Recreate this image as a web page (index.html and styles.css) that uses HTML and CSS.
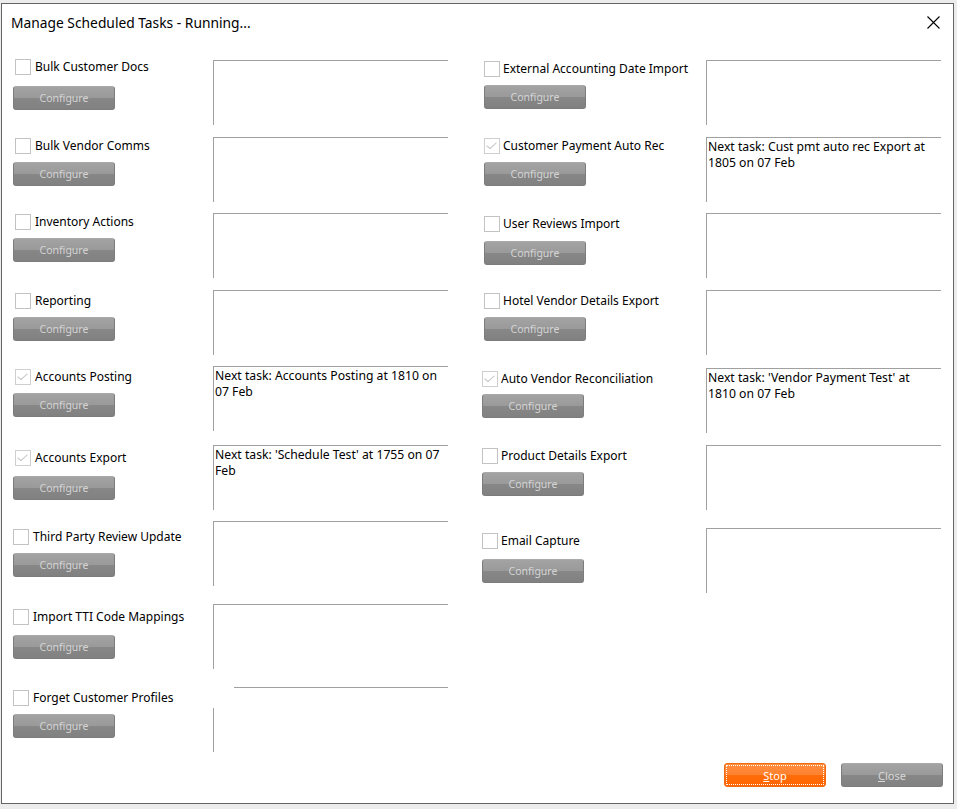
FILE: index.html
```html
<!DOCTYPE html>
<html>
<head>
<meta charset="utf-8">
<title>Manage Scheduled Tasks</title>
<link rel="stylesheet" href="styles.css">
</head>
<body>
<div class="window">
  <div class="titlebar">
    <span class="title">Manage Scheduled Tasks - Running...</span>
    <span class="close-x">
      <svg width="13" height="13" viewBox="0 0 13 13"><path d="M0.5 0.5 L12.5 12.5 M12.5 0.5 L0.5 12.5" stroke="#000" stroke-width="1.1" fill="none"/></svg>
    </span>
  </div>
  <div class="columns">
    <div class="col col-left">
      <div class="row">
        <div class="controls c-a"><label class="check"><span class="box"></span>Bulk Customer Docs</label><span class="btn">Configure</span></div>
        <div class="tbox"></div>
      </div>
      <div class="row g12">
        <div class="controls c-b"><label class="check"><span class="box"></span>Bulk Vendor Comms</label><span class="btn">Configure</span></div>
        <div class="tbox"></div>
      </div>
      <div class="row g11">
        <div class="controls c-b"><label class="check"><span class="box"></span>Inventory Actions</label><span class="btn">Configure</span></div>
        <div class="tbox"></div>
      </div>
      <div class="row g12">
        <div class="controls c-c"><label class="check"><span class="box"></span>Reporting</label><span class="btn">Configure</span></div>
        <div class="tbox"></div>
      </div>
      <div class="row g11">
        <div class="controls c-c"><label class="check"><span class="box on"></span>Accounts Posting</label><span class="btn">Configure</span></div>
        <div class="tbox">Next task: Accounts Posting at 1810 on<br>07 Feb</div>
      </div>
      <div class="row g14">
        <div class="controls c-d"><label class="check"><span class="box on"></span>Accounts Export</label><span class="btn">Configure</span></div>
        <div class="tbox">Next task: 'Schedule Test' at 1755 on 07<br>Feb</div>
      </div>
      <div class="row g11">
        <div class="controls c-e out"><label class="check"><span class="box"></span>Third Party Review Update</label><span class="btn">Configure</span></div>
        <div class="tbox"></div>
      </div>
      <div class="row g18">
        <div class="controls c-d out"><label class="check"><span class="box"></span>Import TTI Code Mappings</label><span class="btn">Configure</span></div>
        <div class="tbox"></div>
      </div>
      <div class="row g18">
        <div class="controls c-c out"><label class="check"><span class="box"></span>Forget Customer Profiles</label><span class="btn">Configure</span></div>
        <div class="tbox masked"></div>
      </div>
    </div>
    <div class="col col-right">
      <div class="row">
        <div class="controls c-b in"><label class="check"><span class="box"></span>External Accounting Date Import</label><span class="btn">Configure</span></div>
        <div class="tbox"></div>
      </div>
      <div class="row g12">
        <div class="controls c-b in"><label class="check"><span class="box on"></span>Customer Payment Auto Rec</label><span class="btn">Configure</span></div>
        <div class="tbox">Next task: Cust pmt auto rec Export at<br>1805 on 07 Feb</div>
      </div>
      <div class="row g11">
        <div class="controls c-c2 in"><label class="check"><span class="box"></span>User Reviews Import</label><span class="btn">Configure</span></div>
        <div class="tbox"></div>
      </div>
      <div class="row g12">
        <div class="controls c-c in"><label class="check"><span class="box"></span>Hotel Vendor Details Export</label><span class="btn">Configure</span></div>
        <div class="tbox"></div>
      </div>
      <div class="row g13">
        <div class="controls c-b2"><label class="check"><span class="box on"></span>Auto Vendor Reconciliation</label><span class="btn">Configure</span></div>
        <div class="tbox">Next task: 'Vendor Payment Test' at<br>1810 on 07 Feb</div>
      </div>
      <div class="row g12">
        <div class="controls c-c"><label class="check"><span class="box"></span>Product Details Export</label><span class="btn">Configure</span></div>
        <div class="tbox"></div>
      </div>
      <div class="row g18">
        <div class="controls c-d"><label class="check"><span class="box"></span>Email Capture</label><span class="btn">Configure</span></div>
        <div class="tbox"></div>
      </div>
    </div>
  </div>
  <div class="footer">
    <span class="btn big orange"><u>S</u>top</span>
    <span class="btn big"><u>C</u>lose</span>
  </div>
</div>
</body>
</html>
```

FILE: styles.css
```css
html, body {
  margin: 0;
  padding: 0;
  background: #ececec;
}
body {
  font-family: "Noto Sans", "Open Sans", sans-serif;
  font-size: 12px;
  color: #000;
  width: 957px;
  height: 809px;
  overflow: hidden;
}
.window {
  margin-top: 3px;
  margin-left: 1px;
  width: 951px;
  height: 799px;
  border: 1px solid #646464;
  background: #fff;
  display: flex;
  flex-direction: column;
}
.titlebar {
  height: 36px;
  display: flex;
  align-items: center;
  justify-content: space-between;
  padding: 0 13px 0 9px;
  flex: none;
}
.title {
  font-size: 13.8px;
  color: #000;
}
.close-x {
  display: flex;
  width: 13px;
  height: 13px;
}
.columns {
  display: flex;
  padding: 20px 0 0 11px;
  gap: 34px;
}
.col {
  display: flex;
  flex-direction: column;
}
.row {
  display: flex;
  height: 65px;
}
.g11 { margin-top: 11px; }
.g12 { margin-top: 12px; }
.g13 { margin-top: 13px; }
.g14 { margin-top: 14px; }
.g18 { margin-top: 18px; }
.col-left .controls { width: 200px; }
.col-right .controls { width: 224px; }
.controls {
  display: flex;
  flex-direction: column;
  align-items: flex-start;
  box-sizing: border-box;
}
.controls.in { padding-left: 2px; }
.check {
  display: flex;
  align-items: center;
  height: 16px;
  line-height: 16px;
  margin-left: 2px;
  white-space: nowrap;
}
.col-right .check,
.controls.out .check { margin-left: 0; }
.col-right .check .box { margin-right: 3px; }
.c-a .check { margin-top: -1px; }
.c-a .btn { margin-top: 11px; }
.c-b .check { margin-top: 1px; }
.c-b .btn { margin-top: 8px; }
.c-b2 .check { margin-top: 3px; }
.c-b2 .btn { margin-top: 7px; }
.c-c .check { margin-top: 3px; }
.c-c .btn { margin-top: 8px; }
.c-c2 .check { margin-top: 3px; }
.c-c2 .btn { margin-top: 9px; }
.c-d .check { margin-top: 5px; }
.c-d .btn { margin-top: 10px; }
.c-e .check { margin-top: 8px; }
.c-e .btn { margin-top: 8px; }
.box {
  width: 14px;
  height: 14px;
  border: 1px solid #c3c3c3;
  background: #fff;
  margin-right: 4px;
  position: relative;
  flex: none;
}
.box.on {
  border-color: #cfcfcf;
}
.box.on::after {
  content: "";
  position: absolute;
  left: 4px;
  top: 1px;
  width: 4px;
  height: 8px;
  border-right: 1px solid #c4c4c4;
  border-bottom: 1px solid #c4c4c4;
  transform: rotate(40deg) skewX(-8deg);
}
.btn {
  display: flex;
  align-items: center;
  justify-content: center;
  width: 100px;
  height: 22px;
  border: 1px solid #7c7c7c;
  border-top-color: #a9a9a9;
  border-radius: 3px;
  background: linear-gradient(#a3a3a3 0, #9a9a9a 48%, #878787 52%, #818181 100%);
  color: #d4d4d4;
  font-size: 10.5px;
  box-sizing: content-box;
}
.tbox {
  width: 233px;
  height: 63px;
  border-top: 1px solid #a0a0a0;
  border-left: 1px solid #a0a0a0;
  padding: 1px 0 0 1px;
  box-sizing: content-box;
  line-height: 16px;
  font-size: 12.2px;
  white-space: nowrap;
  position: relative;
}
.tbox.masked::before {
  content: "";
  position: absolute;
  left: -1px;
  top: -1px;
  width: 21px;
  height: 21px;
  background: #fff;
}
.footer {
  margin-top: auto;
  display: flex;
  justify-content: flex-end;
  gap: 15px;
  padding: 0 10px 16px 0;
}
.btn.big {
  font-size: 11px;
  color: #d8d8d8;
}
.btn.orange {
  background: linear-gradient(#ff8d3e 0, #ff8230 48%, #ff6c08 52%, #ff6600 100%);
  border-color: #f06a10;
  color: #fff;
  outline: 1px dotted #fff;
  outline-offset: -3px;
}
.btn u { text-decoration: underline; }
```
